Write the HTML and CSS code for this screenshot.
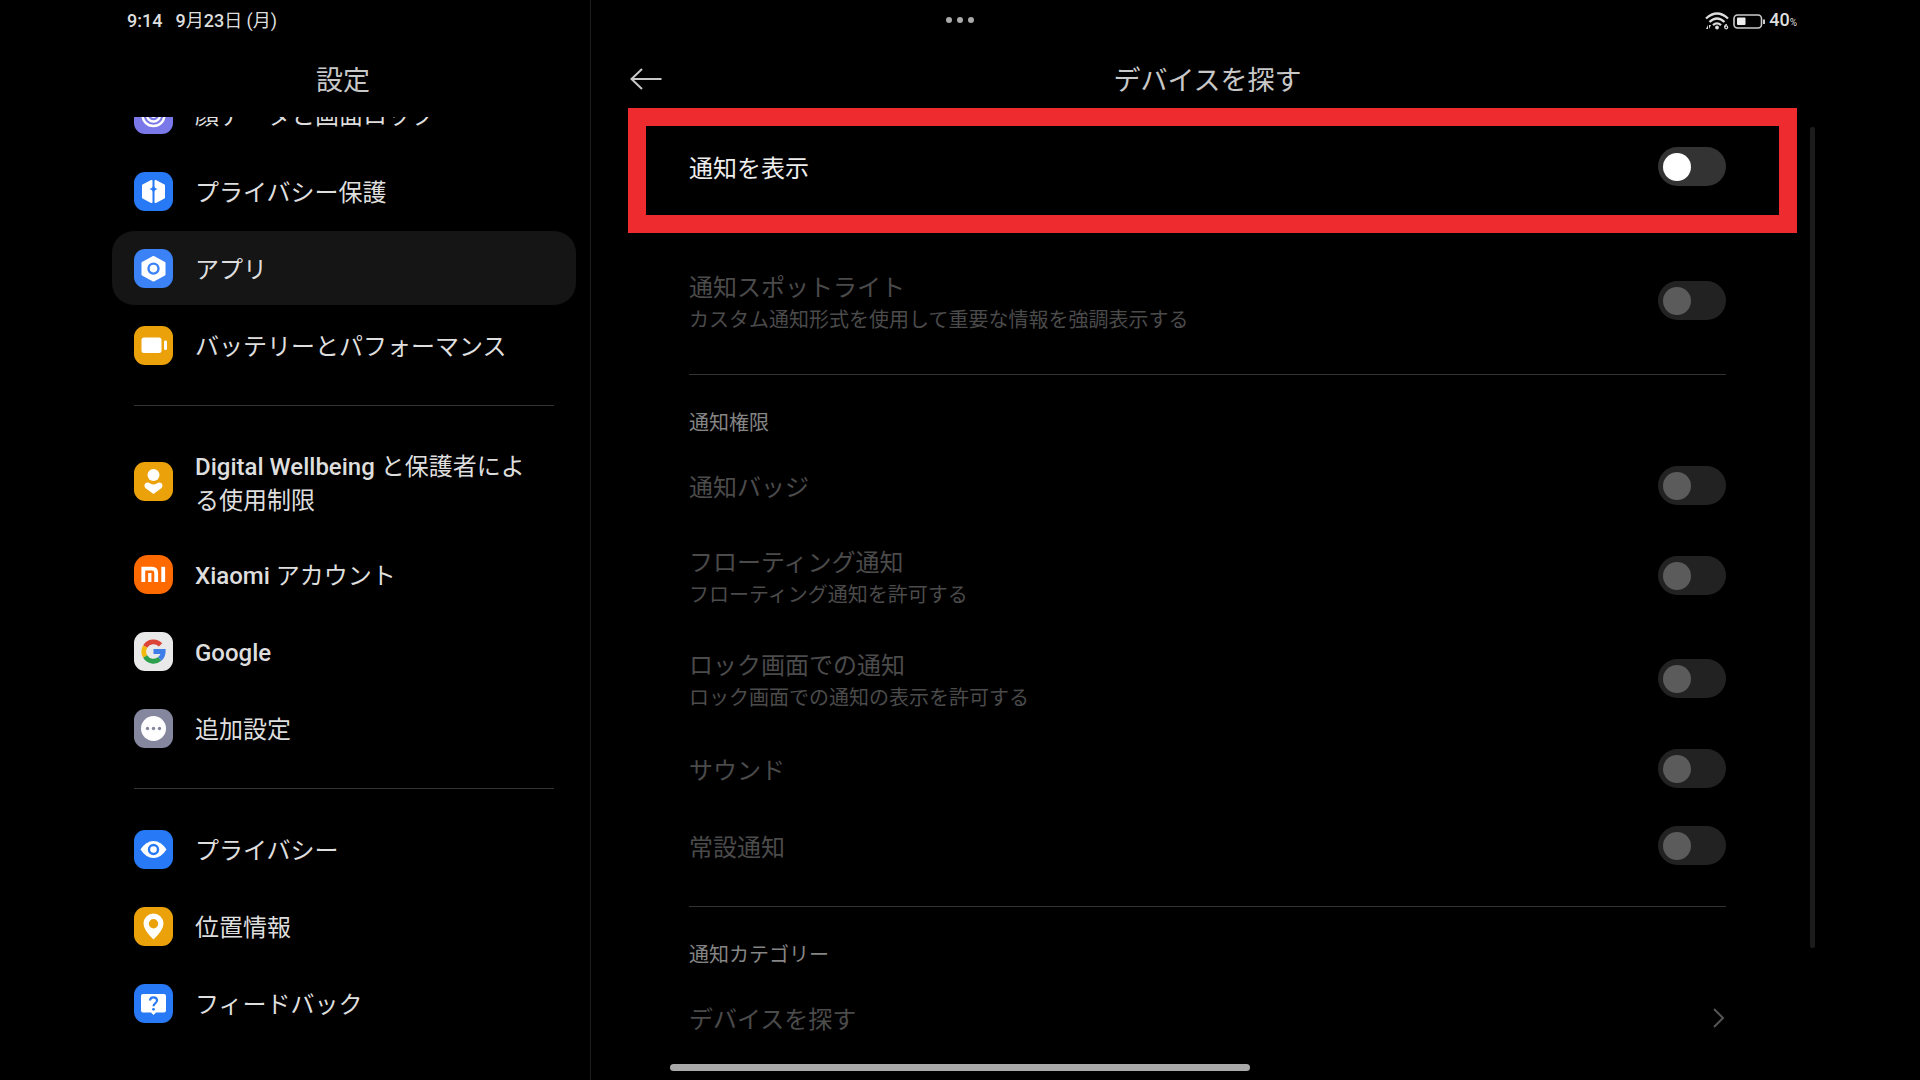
FILE: index.html
```html
<!DOCTYPE html>
<html lang="ja">
<head>
<meta charset="utf-8">
<meta name="viewport" content="width=device-width, initial-scale=1">
<title>設定 - デバイスを探す</title>
<link rel="stylesheet" href="styles.css">
</head>
<body>
<div class="screen">
  <aside class="sidebar">
    <div class="status status-left"><time>9:14</time><span><b>9</b>月<b>23</b>日 (月)</span></div>
    <header class="bar"><h1 class="title">設定</h1></header>
    <nav class="menu" aria-label="設定">
      <a class="item item-scrolled" href="#face">
        <svg class="icon" viewBox="0 0 39 39"><rect width="39" height="39" rx="11" fill="#7b78ea"/><g fill="none" stroke="#fff" stroke-width="2.400"><circle cx="19.500" cy="20" r="11"/><circle cx="19.500" cy="20" r="6.500"/></g><circle cx="19.500" cy="20" r="3" fill="#fff"/></svg>
        <span class="label">顔データと画面ロック</span>
      </a>
      <a class="item" href="#protection">
        <svg class="icon" viewBox="0 0 39 39"><rect width="39" height="39" rx="11" fill="#2779f6"/><path fill="#fff" stroke="#fff" stroke-width="2" stroke-linejoin="round" d="M17.500 9 9 13.500v12L17.500 30zM21.500 9l8.500 4.500v12L21.500 30z"/><path fill="#2779f6" d="M19.500 12.500q.6 4 4.300 4.500-3.700.5-4.300 4.500-.6-4-4.300-4.500 3.700-.5 4.300-4.500z"/></svg>
        <span class="label">プライバシー保護</span>
      </a>
      <a class="item item-current" href="#apps" aria-current="page">
        <svg class="icon" viewBox="0 0 39 39"><rect width="39" height="39" rx="11" fill="#3b82f7"/><path fill="#fff" stroke="#fff" stroke-width="2" stroke-linejoin="round" d="M19.500 8 30.500 14v11.500L19.500 31.500 8.500 25.500V14z"/><circle cx="19.500" cy="19.600" r="5" fill="none" stroke="#3b82f7" stroke-width="2.400"/></svg>
        <span class="label">アプリ</span>
      </a>
      <a class="item" href="#battery">
        <svg class="icon" viewBox="0 0 39 39"><rect width="39" height="39" rx="11" fill="#eba20a"/><rect x="7.500" y="11.500" width="20" height="15.500" rx="2.500" fill="#fff"/><rect x="30" y="14.500" width="3" height="9.500" rx="1.300" fill="#fff"/></svg>
        <span class="label">バッテリーとパフォーマンス</span>
      </a>
      <hr class="rule">
      <a class="item item-tall" href="#wellbeing">
        <svg class="icon" viewBox="0 0 39 39"><rect width="39" height="39" rx="11" fill="#eba20a"/><circle cx="19.500" cy="13" r="6" fill="#fff"/><path fill="#fff" d="M19.500 32 12 26.500c-3-2.500-1-6 1.500-6 2 0 3.500 2 6 2s4-2 6-2c2.500 0 4.500 3.500 1.500 6z"/></svg>
        <span class="label"><b>Digital Wellbeing</b> と保護者による使用制限</span>
      </a>
      <a class="item" href="#xiaomi">
        <svg class="icon" viewBox="0 0 39 39"><rect width="39" height="39" rx="14" fill="#ff6a00"/><g fill="none" stroke="#fff" stroke-width="3.800"><path d="M9.300 27V13.700H18q4.200 0 4.200 4.200V27"/><path stroke-width="3.300" d="M15.800 18v9"/><path d="M29.200 11.800V27"/></g></svg>
        <span class="label"><b>Xiaomi</b> アカウント</span>
      </a>
      <a class="item" href="#google">
        <svg class="icon" viewBox="0 0 39 39"><rect width="39" height="39" rx="11" fill="#e9e9e9"/><g fill="none" stroke-width="4.800"><path stroke="#dc4437" d="M26.500 12.900A9.700 9.700 0 0 0 11.200 14.500"/><path stroke="#f0b90c" d="M11.200 14.500a9.700 9.700 0 0 0 0 10"/><path stroke="#2da04e" d="M11.200 24.500a9.700 9.700 0 0 0 14.600 2.400"/><path stroke="#3f7de8" d="M25.800 26.900q3.400-3 3.400-7.400H19.500"/></g></svg>
        <span class="label"><b>Google</b></span>
      </a>
      <a class="item" href="#more">
        <svg class="icon" viewBox="0 0 39 39"><rect width="39" height="39" rx="11" fill="#85879f"/><circle cx="19.500" cy="19.500" r="12.500" fill="#fff"/><g fill="#85879f"><circle cx="13.500" cy="19.500" r="1.700"/><circle cx="19.500" cy="19.500" r="1.700"/><circle cx="25.500" cy="19.500" r="1.700"/></g></svg>
        <span class="label">追加設定</span>
      </a>
      <hr class="rule">
      <a class="item" href="#privacy">
        <svg class="icon" viewBox="0 0 39 39"><rect width="39" height="39" rx="11" fill="#2779f6"/><path fill="#fff" d="M6.500 19.500Q12 11 19.500 11t13 8.500Q27 28 19.500 28t-13-8.500z"/><circle cx="19.500" cy="19.500" r="4.500" fill="none" stroke="#2779f6" stroke-width="2.400"/></svg>
        <span class="label">プライバシー</span>
      </a>
      <a class="item" href="#location">
        <svg class="icon" viewBox="0 0 39 39"><rect width="39" height="39" rx="11" fill="#eba20a"/><path fill="#fff" fill-rule="evenodd" d="M19.500 32.500Q9.500 23 9.500 16.500a10 10 0 0 1 20 0q0 6.500-10 16zM19.500 12a4.700 4.700 0 1 0 0 9.400 4.700 4.700 0 0 0 0-9.400z"/></svg>
        <span class="label">位置情報</span>
      </a>
      <a class="item" href="#feedback">
        <svg class="icon" viewBox="0 0 39 39"><rect width="39" height="39" rx="11" fill="#2779f6"/><path fill="#fff" d="M9 10h21q2 0 2 2v14.500q0 2-2 2h-8l-2.500 2.500-2.500-2.500H9q-2 0-2-2V12q0-2 2-2z"/><path fill="none" stroke="#2779f6" stroke-width="2.200" d="M16 16.500q.2-3.200 3.500-3.200t3.500 3q0 1.800-1.800 3-1.700 1.100-1.700 3"/><circle cx="19.500" cy="25.300" r="1.400" fill="#2779f6"/></svg>
        <span class="label">フィードバック</span>
      </a>
    </nav>
  </aside>

  <main class="detail">
    <div class="status status-right">
      <svg class="wifi" viewBox="0 0 24 18" role="img" aria-label="Wi-Fi 6"><g fill="none" stroke="#ddd" stroke-width="2.300"><path d="M1 6.500Q12-3.500 23 6.500"/><path d="M4.500 10Q12 3 19.500 10"/><path d="M8 13.200q4-3.700 8 0"/></g><circle cx="12" cy="15.500" r="1.900" fill="#ddd"/><g fill="none" stroke="#ddd" stroke-width="1.200"><path d="M22 12.500q-2.300 0-2.300 2.800"/><circle cx="21.200" cy="15.300" r="1.500"/></g><path fill="#ddd" d="M3 13v4H1zM4 17v-4h2z"/></svg>
      <svg class="battery" viewBox="0 0 32 15" role="img" aria-label="バッテリー"><rect x="1" y="1" width="27.500" height="13" rx="3.500" fill="none" stroke="#ccc" stroke-width="1.600"/><rect x="4" y="3.500" width="8.500" height="7.500" rx="1" fill="#eee"/><path fill="#ccc" d="M30 5.500h2V10h-2z"/></svg>
      <span class="charge"><b>40</b><small>%</small></span>
    </div>
    <header class="bar">
      <button class="back" type="button" aria-label="戻る"><svg viewBox="0 0 32 22"><path d="M31.500 11H1.500M12 1 1.500 11 12 21"/></svg></button>
      <h2 class="title">デバイスを探す</h2>
    </header>
    <div class="options">
      <div class="lead">
        <label class="option"><span class="label">通知を表示</span><input class="switch" type="checkbox" role="switch"></label>
        <div class="highlight"></div>
      </div>
      <label class="option option-double disabled"><span class="label">通知スポットライト<small>カスタム通知形式を使用して重要な情報を強調表示する</small></span><input class="switch" type="checkbox" role="switch" disabled></label>
      <hr class="rule">
      <h3 class="group">通知権限</h3>
      <label class="option disabled"><span class="label">通知バッジ</span><input class="switch" type="checkbox" role="switch" disabled></label>
      <label class="option option-double disabled"><span class="label">フローティング通知<small>フローティング通知を許可する</small></span><input class="switch" type="checkbox" role="switch" disabled></label>
      <label class="option option-double disabled"><span class="label">ロック画面での通知<small>ロック画面での通知の表示を許可する</small></span><input class="switch" type="checkbox" role="switch" disabled></label>
      <label class="option disabled"><span class="label">サウンド</span><input class="switch" type="checkbox" role="switch" disabled></label>
      <label class="option disabled"><span class="label">常設通知</span><input class="switch" type="checkbox" role="switch" disabled></label>
      <hr class="rule">
      <h3 class="group">通知カテゴリー</h3>
      <a class="option disabled" href="#category"><span class="label">デバイスを探す</span><svg class="chevron" viewBox="0 0 14 20"><path d="m2 1 9 9-9 9"/></svg></a>
    </div>
    <div class="scrollbar"></div>
  </main>

  <button class="window-menu" type="button" aria-label="ウィンドウメニュー"><i></i><i></i><i></i></button>
  <div class="home-bar"></div>
</div>
</body>
</html>
```
FILE: styles.css
```css
* {
  box-sizing: border-box;
}

body {
  margin: 0;
  background: #000;
  color: #dedede;
  font: 400 24px/34px Roboto, "Noto Sans CJK JP", sans-serif;
}

a {
  color: inherit;
  text-decoration: none;
}

b {
  font-weight: 500;
}

button {
  padding: 0;
  border: 0;
  background: none;
}

.screen {
  position: relative;
  display: grid;
  grid-template-columns: 495px minmax(0, 1fr);
  height: 100vh;
  padding: 0 5%;
  overflow: hidden;
}

.sidebar,
.detail {
  display: flex;
  flex-direction: column;
  min-width: 0;
  min-height: 0;
}

.sidebar {
  border-right: 1px solid #1d1d1d;
}

.detail {
  position: relative;
}

/* Status line */
.status {
  display: flex;
  align-items: center;
  flex: none;
  height: 40px;
  padding-top: 2px;
  font-size: 18px;
  line-height: 24px;
}

.status-left {
  gap: 13px;
  padding-left: 31px;
}

.status-left time {
  font-weight: 500;
}

.status-right {
  justify-content: flex-end;
  gap: 4px;
  padding-right: 27px;
}

.wifi {
  width: 24px;
  height: 18px;
}

.battery {
  width: 32px;
  height: 15px;
}

.charge small {
  font-size: 10px;
}

/* Title bars */
.bar {
  display: flex;
  align-items: center;
  justify-content: center;
  flex: none;
  position: relative;
  height: 77px;
}

.title {
  margin: 0;
  padding-top: 5px;
  font-size: 27px;
  font-weight: 400;
  line-height: 40px;
  color: #c8c8c8;
}

.back {
  position: absolute;
  left: 39px;
  display: flex;
}

.back svg {
  width: 32px;
  height: 22px;
  fill: none;
  stroke: #c8c8c8;
  stroke-width: 2;
}

/* Settings menu */
.menu {
  display: flex;
  flex-direction: column;
  gap: 3px;
  flex: 1;
  min-height: 0;
  padding: 0 14px 0 16px;
  overflow: hidden;
}

.item {
  display: flex;
  align-items: center;
  gap: 22px;
  flex: none;
  height: 74px;
  padding: 0 44px 0 22px;
  border-radius: 22px;
}

.item-scrolled {
  margin-top: -40px;
}

.item-current {
  background: #151515;
}

.item-tall {
  height: 105px;
}

.icon {
  flex: none;
  width: 39px;
  height: 39px;
}

.label {
  padding-top: 4px;
}

.label small {
  display: block;
  font-size: 20px;
  line-height: 30px;
}

.rule {
  flex: none;
  height: 1px;
  margin: 22px 0;
  border: 0;
  background: #333;
}

.menu .rule {
  margin: 20px 22px;
}

/* Notification options */
.options {
  display: flex;
  flex-direction: column;
  flex: 1;
  min-height: 0;
  padding: 11px 98px 0;
}

.lead {
  position: relative;
  margin-bottom: 44px;
  color: #eee;
}

.highlight {
  position: absolute;
  inset: -20px -71px -28px -61px;
  border: 18px solid #ee2b2e;
  pointer-events: none;
}

.option {
  display: flex;
  align-items: center;
  justify-content: space-between;
  flex: none;
  height: 77px;
}

.option-double {
  height: 103px;
}

.disabled {
  color: #4b4b4b;
}

.group {
  flex: none;
  height: 50px;
  margin: 0;
  padding-top: 1px;
  font-size: 20px;
  font-weight: 400;
  line-height: 50px;
  color: #858585;
}

.switch {
  flex: none;
  display: flex;
  align-items: center;
  width: 68px;
  height: 39px;
  margin: 0;
  padding: 0 5px;
  border-radius: 20px;
  background: #333;
  appearance: none;
}

.switch::before {
  content: "";
  width: 28px;
  height: 28px;
  border-radius: 50%;
  background: #fff;
}

.switch:checked {
  justify-content: flex-end;
  background: #2779f6;
}

.switch:disabled {
  background: #222;
}

.switch:disabled::before {
  background: #5b5b5b;
}

.chevron {
  width: 14px;
  height: 20px;
  fill: none;
  stroke: #555;
  stroke-width: 2;
}

/* Overlays */
.scrollbar {
  position: absolute;
  top: 127px;
  right: 9px;
  width: 5px;
  height: 76%;
  border-radius: 2px;
  background: #1c1c1c;
}

.window-menu {
  position: absolute;
  top: 17px;
  left: 50%;
  display: flex;
  gap: 5px;
  transform: translateX(-50%);
}

.window-menu i {
  width: 6px;
  height: 6px;
  border-radius: 50%;
  background: #aaa;
}

.home-bar {
  position: absolute;
  bottom: 9px;
  left: 50%;
  width: 580px;
  height: 7px;
  border-radius: 4px;
  background: #a9a9a9;
  transform: translateX(-50%);
}
```
